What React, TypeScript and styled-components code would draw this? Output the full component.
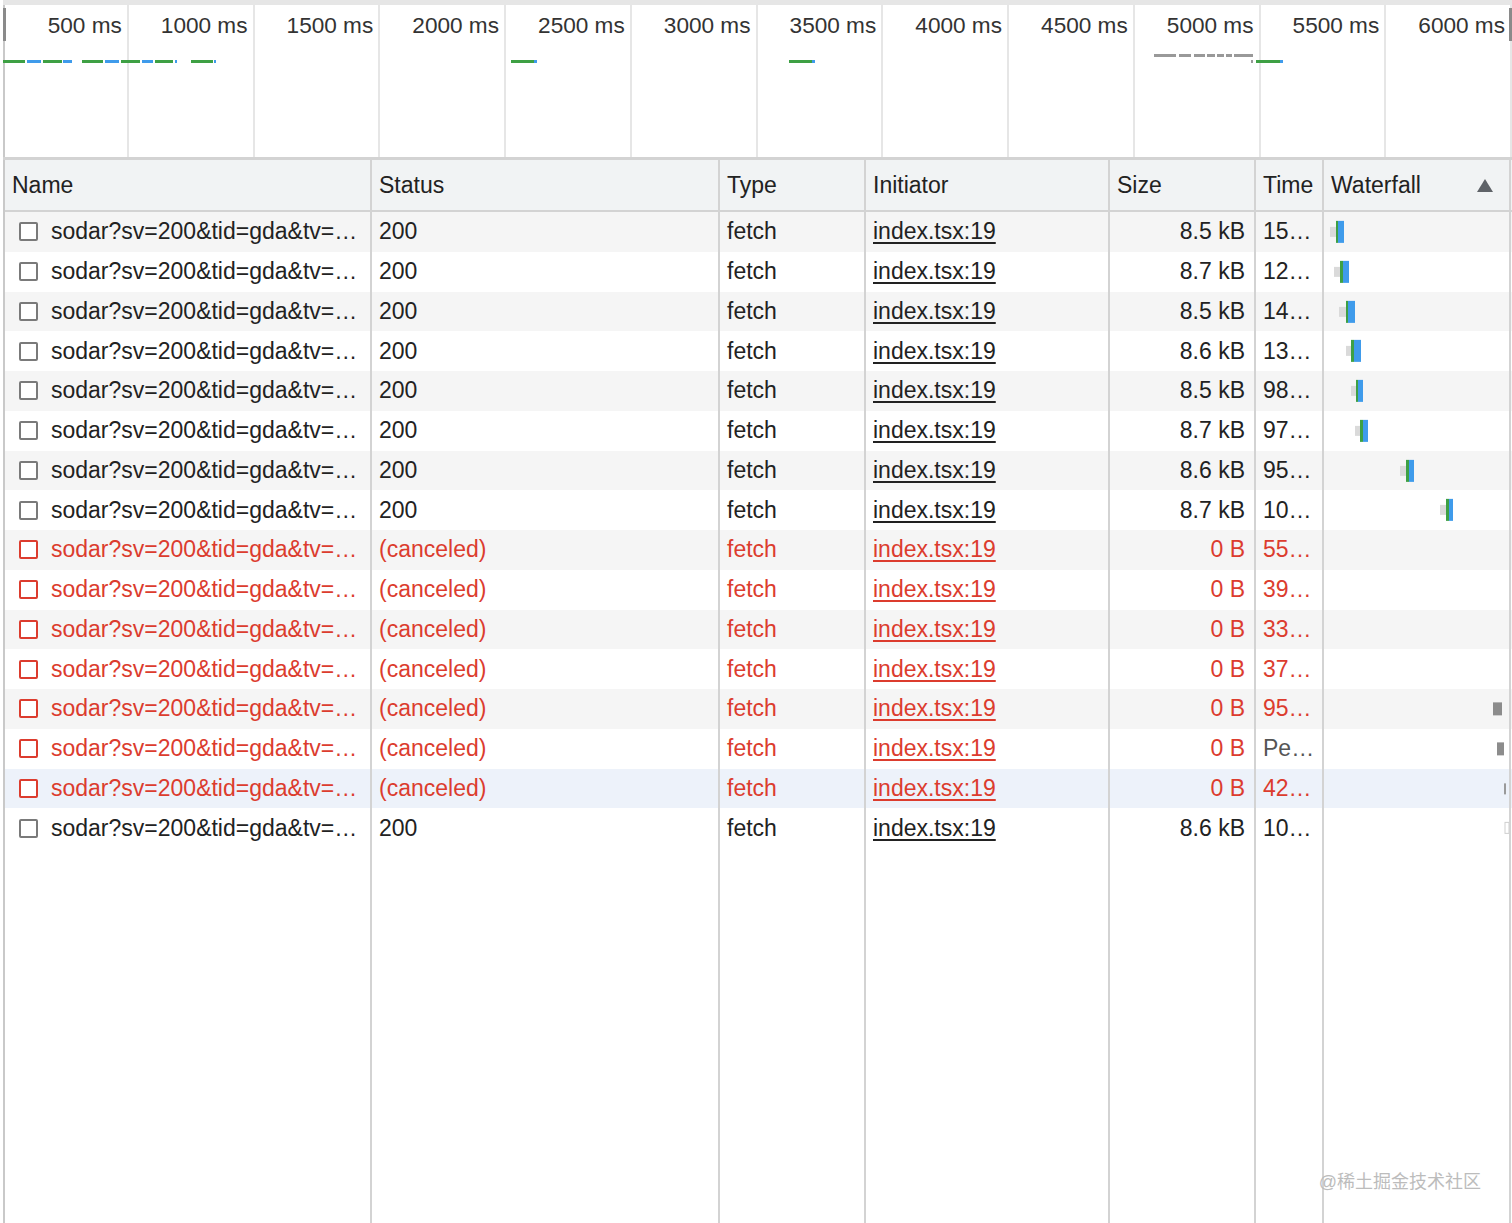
import React from 'react';
import styled, { createGlobalStyle } from 'styled-components';

const GlobalStyle = createGlobalStyle`
  html, body {
    margin: 0;
    padding: 0;
    background: #fff;
  }
  body {
    font-family: "Liberation Sans", Arial, sans-serif;
    color: #222;
  }
`;

const COLS = '367px 348px 146px 244px 146px 68px 187px';
const RED = '#dc3c2e';
const GREEN = '#3ea044';
const BLUE = '#3f9beb';

const Page = styled.div`
  position: relative;
  width: 1512px;
  height: 1223px;
  padding-left: 3px;
  box-sizing: border-box;
  overflow: hidden;
`;

const Frame = styled.div`
  display: flex;
  flex-direction: column;
  height: 100%;
  border-left: 2px solid #c9c9c9;
`;

const Overview = styled.div`
  position: relative;
  display: flex;
  height: 152px;
  margin-left: -2px;
  border-top: 5px solid #e6e6e6;
  border-bottom: 3px solid #d3d3d3;
`;

const Tick = styled.div`
  flex: 1 1 0;
  min-width: 0;
  padding: 8px 5px 0 0;
  border-right: 2px solid #e6e6e6;
  text-align: right;
  font-size: 22.6px;
  line-height: 26px;
  color: #333;
  white-space: nowrap;

  &:last-child {
    border-right: none;
  }
`;

const Handle = styled.div<{ $side: 'left' | 'right' }>`
  position: absolute;
  top: 3px;
  ${({ $side }) => ($side === 'left' ? 'left: 0;' : 'right: 0;')}
  width: 3px;
  height: 33px;
  background: #8a8a8a;
`;

const OverviewChart = styled.svg`
  position: absolute;
  left: -3px;
  top: -5px;
  width: 1512px;
  height: 160px;
  pointer-events: none;
`;

const Table = styled.div`
  flex: 1;
  display: flex;
  flex-direction: column;
`;

const HeaderRow = styled.div`
  display: grid;
  grid-template-columns: ${COLS};
  height: 50px;
  background: #f1f3f4;
  border-bottom: 2px solid #d3d3d3;
`;

const HeaderCell = styled.div`
  display: flex;
  align-items: center;
  justify-content: space-between;
  padding: 0 16px 0 7px;
  border-right: 2px solid #d3d3d3;
  font-size: 23px;
  color: #222;
`;

const SortArrow = styled.span`
  width: 0;
  height: 0;
  border-left: 8px solid transparent;
  border-right: 8px solid transparent;
  border-bottom: 13px solid #5f6368;
`;

const Row = styled.div<{ $bg: string; $red?: boolean }>`
  display: grid;
  grid-template-columns: ${COLS};
  height: 39.75px;
  background: ${({ $bg }) => $bg};
  color: ${({ $red }) => ($red ? RED : '#222')};
  font-size: 23px;
`;

const Cell = styled.div<{ $align?: 'left' | 'right'; $muted?: boolean }>`
  display: flex;
  align-items: center;
  justify-content: ${({ $align }) => ($align === 'right' ? 'flex-end' : 'flex-start')};
  padding: 0 9px 0 7px;
  border-right: 2px solid #d3d3d3;
  white-space: nowrap;
  overflow: hidden;
  ${({ $muted }) => ($muted ? 'color: #555;' : '')}
`;

const NameCell = styled(Cell)`
  padding-left: 14px;
  gap: 13px;
`;

const Check = styled.span<{ $red?: boolean }>`
  width: 15px;
  height: 15px;
  flex-shrink: 0;
  border: 2px solid ${({ $red }) => ($red ? RED : '#7a7a7a')};
  border-radius: 2px;
  background: #fff;
`;

const Link = styled.span`
  text-decoration: underline;
  text-underline-offset: 3px;
`;

const WaterfallCell = styled.div`
  position: relative;
  border-right: 2px solid #d3d3d3;
`;

const Bars = styled.svg`
  position: absolute;
  inset: 0;
  width: 185px;
  height: 39.75px;
`;

const Filler = styled.div`
  flex: 1;
  display: grid;
  grid-template-columns: ${COLS};
`;

const FillerCell = styled.div`
  border-right: 2px solid #d3d3d3;
`;

const Watermark = styled.div`
  position: absolute;
  right: 31px;
  bottom: 30px;
  font-family: "Liberation Sans", "Noto Sans CJK SC", sans-serif;
  font-size: 18px;
  color: #bcbcbc;
`;

type Seg = [number, number, string];

const overviewSegs: Seg[] = [
  [3, 25, GREEN], [27, 41, BLUE], [43, 62, GREEN], [63, 72, BLUE],
  [82, 103, GREEN], [105, 119, BLUE], [121, 140, GREEN], [142, 153, BLUE],
  [155, 173, GREEN], [175, 177, BLUE], [191, 213, GREEN], [214, 216, BLUE],
  [511, 534, GREEN], [534, 537, BLUE], [789, 812, GREEN], [812, 815, BLUE],
  [1251, 1253, '#999'], [1256, 1280, GREEN], [1280, 1283, BLUE],
];

const greySegs: [number, number][] = [
  [1154, 1176], [1179, 1191], [1194, 1205], [1207, 1215], [1217, 1224], [1226, 1232], [1234, 1253],
];

type Bar = { x: number; w: number; h: number; fill: string; stroke?: string };

const req = (g: number, gr: number, b: number, end: number): Bar[] => [
  { x: g, w: gr - g, h: 10, fill: '#dadada' },
  { x: gr, w: b - gr, h: 22, fill: GREEN },
  { x: b, w: end - b, h: 22, fill: BLUE },
];

type Req = {
  time: string;
  size: string;
  canceled?: boolean;
  timeMuted?: boolean;
  bars: Bar[];
};

const rows: Req[] = [
  { time: '15…', size: '8.5 kB', bars: req(1330, 1336, 1338, 1344) },
  { time: '12…', size: '8.7 kB', bars: req(1334, 1340, 1343, 1349) },
  { time: '14…', size: '8.5 kB', bars: req(1339, 1346, 1348, 1355) },
  { time: '13…', size: '8.6 kB', bars: req(1346, 1351, 1354, 1361) },
  { time: '98…', size: '8.5 kB', bars: req(1351, 1356, 1358, 1363) },
  { time: '97…', size: '8.7 kB', bars: req(1355, 1360, 1363, 1368) },
  { time: '95…', size: '8.6 kB', bars: req(1400, 1406, 1409, 1414) },
  { time: '10…', size: '8.7 kB', bars: req(1440, 1446, 1449, 1453) },
  { time: '55…', size: '0 B', canceled: true, bars: [] },
  { time: '39…', size: '0 B', canceled: true, bars: [] },
  { time: '33…', size: '0 B', canceled: true, bars: [] },
  { time: '37…', size: '0 B', canceled: true, bars: [] },
  { time: '95…', size: '0 B', canceled: true, bars: [{ x: 1493, w: 9, h: 13, fill: '#8c8c8c' }] },
  { time: 'Pe…', size: '0 B', canceled: true, timeMuted: true, bars: [{ x: 1497, w: 7, h: 13, fill: '#8c8c8c' }] },
  { time: '42…', size: '0 B', canceled: true, bars: [{ x: 1504, w: 2, h: 11, fill: '#9a9a9a' }] },
  { time: '10…', size: '8.6 kB', bars: [{ x: 1505, w: 4, h: 11, fill: '#fff', stroke: '#cfcfcf' }] },
];

const ticks = ['500 ms', '1000 ms', '1500 ms', '2000 ms', '2500 ms', '3000 ms', '3500 ms', '4000 ms', '4500 ms', '5000 ms', '5500 ms', '6000 ms'];
const headers = ['Name', 'Status', 'Type', 'Initiator', 'Size', 'Time'];

const rowBg = (i: number) => {
  if (i === 14) return '#edf2fa';
  return i % 2 === 0 ? '#f5f5f5' : '#fff';
};

export default function App() {
  return (
    <>
      <GlobalStyle />
      <Page>
        <Frame>
          <Overview>
            {ticks.map((t) => (
              <Tick key={t}>{t}</Tick>
            ))}
            <Handle $side="left" />
            <Handle $side="right" />
            <OverviewChart viewBox="0 0 1512 160">
              {overviewSegs.map(([a, b, c], i) => (
                <rect key={i} x={a} y={60} width={b - a} height={3} fill={c} />
              ))}
              {greySegs.map(([a, b], i) => (
                <rect key={`g${i}`} x={a} y={54} width={b - a} height={3} fill="#999" />
              ))}
            </OverviewChart>
          </Overview>

          <Table>
            <HeaderRow>
              {headers.map((h) => (
                <HeaderCell key={h}>{h}</HeaderCell>
              ))}
              <HeaderCell>
                Waterfall
                <SortArrow />
              </HeaderCell>
            </HeaderRow>

            {rows.map((r, i) => (
              <Row key={i} $bg={rowBg(i)} $red={r.canceled}>
                <NameCell>
                  <Check $red={r.canceled} />
                  sodar?sv=200&amp;tid=gda&amp;tv=…
                </NameCell>
                <Cell>{r.canceled ? '(canceled)' : '200'}</Cell>
                <Cell>fetch</Cell>
                <Cell>
                  <Link>index.tsx:19</Link>
                </Cell>
                <Cell $align="right">{r.size}</Cell>
                <Cell $muted={r.timeMuted}>{r.time}</Cell>
                <WaterfallCell>
                  <Bars viewBox="0 0 185 39.75">
                    {r.bars.map((b, j) => (
                      <rect
                        key={j}
                        x={b.x - 1324}
                        y={(39.75 - b.h) / 2}
                        width={b.w}
                        height={b.h}
                        fill={b.fill}
                        stroke={b.stroke}
                        strokeWidth={b.stroke ? 1 : 0}
                      />
                    ))}
                  </Bars>
                </WaterfallCell>
              </Row>
            ))}

            <Filler>
              {headers.concat('Waterfall').map((h) => (
                <FillerCell key={h} />
              ))}
            </Filler>
          </Table>
        </Frame>
        <Watermark>@稀土掘金技术社区</Watermark>
      </Page>
    </>
  );
}
